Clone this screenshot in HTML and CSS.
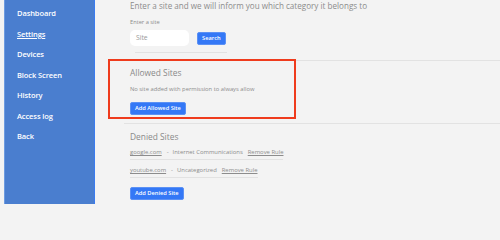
FILE: index.html
```html
<!DOCTYPE html>
<html>
<head>
<meta charset="utf-8">
<link rel="stylesheet" href="styles.css">
</head>
<body>
<div class="page">
  <nav class="sidebar">
    <a class="nav-item">Dashboard</a>
    <a class="nav-item active">Settings</a>
    <a class="nav-item">Devices</a>
    <a class="nav-item">Block Screen</a>
    <a class="nav-item">History</a>
    <a class="nav-item">Access log</a>
    <a class="nav-item">Back</a>
  </nav>
  <main class="main">
    <section class="search">
      <p class="intro">Enter a site and we will inform you which category it belongs to</p>
      <div class="label">Enter a site</div>
      <div class="search-row">
        <div class="input">Site</div>
        <button class="btn">Search</button>
      </div>
      <div class="short-rule"></div>
    </section>
    <section class="block allowed">
      <h2 class="title">Allowed Sites</h2>
      <p class="note">No site added with permission to always allow</p>
      <button class="btn">Add Allowed Site</button>
      <div class="highlight"></div>
    </section>
    <section class="block denied">
      <h2 class="title">Denied Sites</h2>
      <div class="rule-row"><span class="link">google.com</span><span class="dash">-</span><span class="cat">Internet Communications</span><span class="link">Remove Rule</span></div>
      <div class="rule-row"><span class="link">youtube.com</span><span class="dash">-</span><span class="cat">Uncategorized</span><span class="link">Remove Rule</span></div>
      <button class="btn">Add Denied Site</button>
    </section>
  </main>
</div>
</body>
</html>
```
FILE: styles.css
```css
html, body {
  margin: 0;
  padding: 0;
  background: #f3f3f3;
  font-family: "Open Sans", "Liberation Sans", sans-serif;
  overflow: hidden;
  height: 204px;
}
.page {
  display: flex;
  height: 204px;
  width: 500px;
  overflow: hidden;
}
.sidebar {
  margin-left: 4px;
  width: 91px;
  height: 204px;
  box-sizing: border-box;
  background: #4a7ecf;
  border-left: 1px solid #6d9be0;
  border-right: 1px solid #3a7bef;
  display: flex;
  flex-direction: column;
  padding-top: 7px;
  flex-shrink: 0;
}
.nav-item {
  color: #fff;
  font-size: 7.5px;
  font-weight: 600;
  height: 20.5px;
  flex-shrink: 0;
  line-height: 12px;
  padding-left: 12px;
  letter-spacing: -0.1px;
}
.nav-item.active { text-decoration: underline; }
.main {
  flex: 1;
  padding-left: 29px;
  display: flex;
  flex-direction: column;
}
.search {
  padding-left: 6px;
  height: 60px;
  box-sizing: border-box;
}
.intro {
  margin: 0;
  padding-top: 1px;
  font-size: 8.1px;
  line-height: 9px;
  color: #8c8c8c;
}
.label {
  margin-top: 9px;
  font-size: 5.7px;
  line-height: 7px;
  color: #8c8c8c;
}
.search-row {
  display: flex;
  align-items: center;
  gap: 8px;
  margin-top: 4px;
}
.input {
  width: 53px;
  height: 16px;
  background: #fff;
  border-radius: 5px;
  font-size: 6.8px;
  line-height: 16px;
  color: #999;
  padding-left: 6px;
}
.btn {
  background: #3478f6;
  color: #fff;
  border: 1px solid #5c91f4;
  border-radius: 2px;
  font-family: inherit;
  font-size: 5.7px;
  font-weight: 600;
  height: 13px;
  padding: 0 4px;
  line-height: 11px;
  margin: 0;
}
.short-rule {
  margin-top: 6px;
  margin-left: 5px;
  width: 92px;
  height: 1px;
  background: #e2e2e2;
}
.block {
  position: relative;
  border-top: 1px solid #e2e2e2;
  padding-left: 6px;
}
.allowed { height: 63px; box-sizing: border-box; }
.title {
  margin: 0;
  padding-top: 7px;
  font-size: 8.4px;
  line-height: 10px;
  font-weight: 400;
  color: #8a8a8a;
}
.note {
  margin: 0;
  margin-top: 8px;
  font-size: 5.8px;
  line-height: 7px;
  color: #8c8c8c;
}
.allowed .btn { margin-top: 8px; }
.highlight {
  position: absolute;
  left: -16px;
  top: -2px;
  width: 184px;
  height: 56px;
  border: 2px solid #ef3b1d;
}
.rule-row {
  display: table;
  font-size: 5.9px;
  line-height: 7px;
  color: #8c8c8c;
  border-bottom: 1px solid #e2e2e2;
  padding-bottom: 3px;
  margin-top: 7px;
}
.denied .title { padding-top: 8px; }
.link { text-decoration: underline; }
.dash { margin: 0 4px 0 5px; }
.cat { margin-right: 5px; }
.denied .btn { margin-top: 4px; height: 13px; }
```
